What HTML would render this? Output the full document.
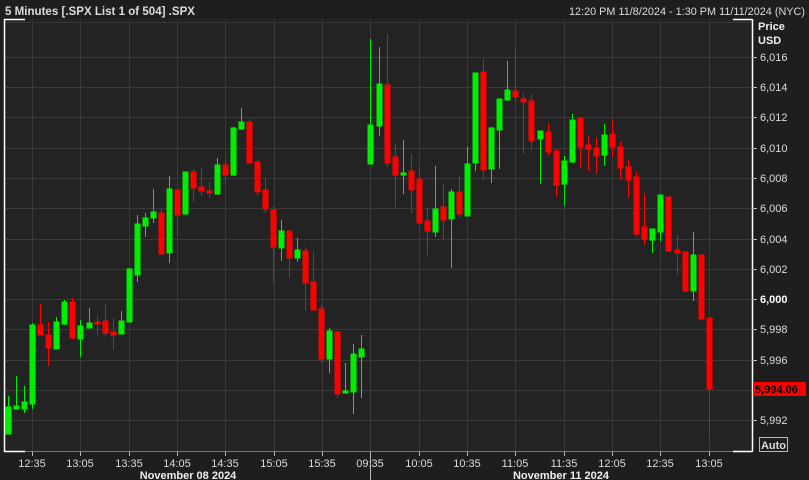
<!DOCTYPE html>
<html><head><meta charset="utf-8"><style>
html,body{margin:0;padding:0;background:#1e1e1e;width:809px;height:480px;overflow:hidden}
svg{display:block}
text{font-family:"Liberation Sans",sans-serif}
.g{fill:#00ee00;stroke:#00ee00}
.r{fill:#ff0000;stroke:#ff0000}
</style></head><body>
<svg width="809" height="480" viewBox="0 0 809 480" xmlns="http://www.w3.org/2000/svg">
<rect x="0" y="0" width="809" height="480" fill="#1e1e1e"/>
<rect x="4" y="19" width="748" height="432" fill="#222322"/>
<text x="5" y="15" font-size="12" font-weight="bold" fill="#dcdcdc" textLength="190" lengthAdjust="spacingAndGlyphs">5 Minutes [.SPX List 1 of 504] .SPX</text>
<text x="569" y="15" font-size="11" fill="#dcdcdc" textLength="236" lengthAdjust="spacingAndGlyphs">12:20 PM 11/8/2024 - 1:30 PM 11/11/2024 (NYC)</text>
<g stroke="#3a3a3a" stroke-width="1">
<line x1="4" y1="22.5" x2="752" y2="22.5"/>
<line x1="4" y1="57.5" x2="752" y2="57.5"/><line x1="4" y1="87.5" x2="752" y2="87.5"/><line x1="4" y1="117.5" x2="752" y2="117.5"/><line x1="4" y1="148.5" x2="752" y2="148.5"/><line x1="4" y1="178.5" x2="752" y2="178.5"/><line x1="4" y1="208.5" x2="752" y2="208.5"/><line x1="4" y1="239.5" x2="752" y2="239.5"/><line x1="4" y1="269.5" x2="752" y2="269.5"/><line x1="4" y1="299.5" x2="752" y2="299.5"/><line x1="4" y1="329.5" x2="752" y2="329.5"/><line x1="4" y1="360.5" x2="752" y2="360.5"/><line x1="4" y1="390.5" x2="752" y2="390.5"/><line x1="4" y1="420.5" x2="752" y2="420.5"/>
<line x1="32.5" y1="19" x2="32.5" y2="451"/><line x1="80.5" y1="19" x2="80.5" y2="451"/><line x1="129.5" y1="19" x2="129.5" y2="451"/><line x1="177.5" y1="19" x2="177.5" y2="451"/><line x1="225.5" y1="19" x2="225.5" y2="451"/><line x1="274.5" y1="19" x2="274.5" y2="451"/><line x1="322.5" y1="19" x2="322.5" y2="451"/><line x1="370.5" y1="19" x2="370.5" y2="451"/><line x1="419.5" y1="19" x2="419.5" y2="451"/><line x1="467.5" y1="19" x2="467.5" y2="451"/><line x1="515.5" y1="19" x2="515.5" y2="451"/><line x1="564.5" y1="19" x2="564.5" y2="451"/><line x1="612.5" y1="19" x2="612.5" y2="451"/><line x1="660.5" y1="19" x2="660.5" y2="451"/><line x1="709.5" y1="19" x2="709.5" y2="451"/>
</g>
<line x1="4" y1="451.5" x2="752" y2="451.5" stroke="#777"/>
<g stroke="#fff" stroke-width="1.5">
<line x1="4.5" y1="19" x2="4.5" y2="452"/>
<line x1="4" y1="19.5" x2="25" y2="19.5"/><line x1="733" y1="19.5" x2="752" y2="19.5"/>
<line x1="4" y1="451.5" x2="25" y2="451.5"/><line x1="733" y1="451.5" x2="752" y2="451.5"/>
<line x1="752.5" y1="19" x2="752.5" y2="452"/>
</g>
<g stroke-width="1">
<!-- Day 1 -->
<g class="g"><line x1="8.5" y1="396" x2="8.5" y2="434"/><rect x="6" y="407" width="5" height="27"/></g>
<g class="g"><line x1="16.5" y1="376" x2="16.5" y2="410"/><rect x="14" y="406" width="5" height="3"/></g>
<g class="g"><line x1="24.5" y1="386" x2="24.5" y2="413"/><rect x="22" y="402" width="5" height="7"/></g>
<g class="g"><line x1="32.5" y1="323" x2="32.5" y2="409"/><rect x="30" y="325" width="5" height="79"/></g>
<g class="r"><line x1="40.5" y1="304" x2="40.5" y2="335"/><rect x="38" y="325" width="5" height="10"/></g>
<g class="r"><line x1="48.5" y1="322" x2="48.5" y2="366"/><rect x="46" y="335" width="5" height="13"/></g>
<g class="g"><line x1="56.5" y1="317" x2="56.5" y2="349"/><rect x="54" y="322" width="5" height="27"/></g>
<g class="g"><line x1="64.5" y1="300" x2="64.5" y2="325"/><rect x="62" y="302" width="5" height="22"/></g>
<g class="r"><line x1="72.5" y1="298" x2="72.5" y2="339"/><rect x="70" y="302" width="5" height="36"/></g>
<g class="g"><line x1="80.5" y1="320" x2="80.5" y2="357"/><rect x="78" y="326" width="5" height="13"/></g>
<g class="g"><line x1="89.5" y1="308" x2="89.5" y2="328"/><rect x="87" y="323" width="5" height="5"/></g>
<g class="r"><line x1="97.5" y1="315" x2="97.5" y2="335"/><rect x="95" y="322" width="5" height="2"/></g>
<g class="r"><line x1="105.5" y1="304" x2="105.5" y2="337"/><rect x="103" y="321" width="5" height="12"/></g>
<g class="r"><line x1="113.5" y1="318" x2="113.5" y2="350"/><rect x="111" y="332" width="5" height="3"/></g>
<g class="g"><line x1="121.5" y1="311" x2="121.5" y2="334"/><rect x="119" y="321" width="5" height="13"/></g>
<g class="g"><line x1="129.5" y1="268" x2="129.5" y2="322"/><rect x="127" y="269" width="5" height="53"/></g>
<g class="g"><line x1="137.5" y1="215" x2="137.5" y2="282"/><rect x="135" y="224" width="5" height="51"/></g>
<g class="g"><line x1="145.5" y1="213" x2="145.5" y2="237"/><rect x="143" y="218" width="5" height="8"/></g>
<g class="g"><line x1="153.5" y1="189" x2="153.5" y2="223"/><rect x="151" y="212" width="5" height="6"/></g>
<g class="r"><line x1="161.5" y1="209" x2="161.5" y2="255"/><rect x="159" y="213" width="5" height="41"/></g>
<g class="g"><line x1="169.5" y1="176" x2="169.5" y2="263"/><rect x="167" y="189" width="5" height="64"/></g>
<g class="r"><line x1="177.5" y1="190" x2="177.5" y2="236"/><rect x="175" y="190" width="5" height="25"/></g>
<g class="g"><line x1="185.5" y1="172" x2="185.5" y2="214"/><rect x="183" y="172" width="5" height="42"/></g>
<g class="r"><line x1="193.5" y1="169" x2="193.5" y2="202"/><rect x="191" y="172" width="5" height="16"/></g>
<g class="r"><line x1="201.5" y1="168" x2="201.5" y2="196"/><rect x="199" y="187" width="5" height="4"/></g>
<g class="r"><line x1="209.5" y1="182" x2="209.5" y2="198"/><rect x="207" y="191" width="5" height="2"/></g>
<g class="g"><line x1="217.5" y1="158" x2="217.5" y2="195"/><rect x="215" y="165" width="5" height="29"/></g>
<g class="r"><line x1="225.5" y1="159" x2="225.5" y2="185"/><rect x="223" y="165" width="5" height="10"/></g>
<g class="g"><line x1="233.5" y1="127" x2="233.5" y2="176"/><rect x="231" y="128" width="5" height="47"/></g>
<g class="g"><line x1="241.5" y1="108" x2="241.5" y2="130"/><rect x="239" y="122" width="5" height="7"/></g>
<g class="r"><line x1="249.5" y1="119" x2="249.5" y2="163"/><rect x="247" y="122" width="5" height="41"/></g>
<g class="r"><line x1="257.5" y1="160" x2="257.5" y2="196"/><rect x="255" y="162" width="5" height="30"/></g>
<g class="r"><line x1="265.5" y1="178" x2="265.5" y2="213"/><rect x="263" y="190" width="5" height="19"/></g>
<g class="r"><line x1="273.5" y1="206" x2="273.5" y2="283"/><rect x="271" y="210" width="5" height="37"/></g>
<g class="g"><line x1="281.5" y1="220" x2="281.5" y2="261"/><rect x="279" y="231" width="5" height="17"/></g>
<g class="r"><line x1="289.5" y1="231" x2="289.5" y2="278"/><rect x="287" y="231" width="5" height="27"/></g>
<g class="g"><line x1="297.5" y1="238" x2="297.5" y2="262"/><rect x="295" y="250" width="5" height="8"/></g>
<g class="r"><line x1="305.5" y1="247" x2="305.5" y2="311"/><rect x="303" y="251" width="5" height="32"/></g>
<g class="r"><line x1="313.5" y1="251" x2="313.5" y2="310"/><rect x="311" y="282" width="5" height="28"/></g>
<g class="r"><line x1="321.5" y1="305" x2="321.5" y2="363"/><rect x="319" y="309" width="5" height="50"/></g>
<g class="g"><line x1="329.5" y1="328" x2="329.5" y2="373"/><rect x="327" y="331" width="5" height="28"/></g>
<g class="r"><line x1="337.5" y1="332" x2="337.5" y2="398"/><rect x="335" y="332" width="5" height="62"/></g>
<g class="g"><line x1="345.5" y1="363" x2="345.5" y2="393"/><rect x="343" y="391" width="5" height="2"/></g>
<g class="g"><line x1="353.5" y1="344" x2="353.5" y2="414"/><rect x="351" y="354" width="5" height="38"/></g>
<g class="g"><line x1="361.5" y1="335" x2="361.5" y2="398"/><rect x="359" y="349" width="5" height="8"/></g>
<!-- Day 2 -->
<g class="g"><line x1="370.5" y1="39" x2="370.5" y2="164"/><rect x="368" y="125" width="5" height="39"/></g>
<g class="g"><line x1="379.5" y1="47" x2="379.5" y2="136"/><rect x="377" y="84" width="5" height="42"/></g>
<g class="r"><line x1="387.5" y1="34" x2="387.5" y2="167"/><rect x="385" y="85" width="5" height="78"/></g>
<g class="r"><line x1="395.5" y1="143" x2="395.5" y2="207"/><rect x="393" y="157" width="5" height="18"/></g>
<g class="g"><line x1="403.5" y1="140" x2="403.5" y2="194"/><rect x="401" y="173" width="5" height="2"/></g>
<g class="r"><line x1="411.5" y1="154" x2="411.5" y2="213"/><rect x="409" y="171" width="5" height="19"/></g>
<g class="r"><line x1="419.5" y1="166" x2="419.5" y2="227"/><rect x="417" y="179" width="5" height="44"/></g>
<g class="r"><line x1="427.5" y1="208" x2="427.5" y2="255"/><rect x="425" y="221" width="5" height="10"/></g>
<g class="g"><line x1="435.5" y1="166" x2="435.5" y2="237"/><rect x="433" y="209" width="5" height="23"/></g>
<g class="r"><line x1="443.5" y1="184" x2="443.5" y2="239"/><rect x="441" y="207" width="5" height="13"/></g>
<g class="g"><line x1="451.5" y1="189" x2="451.5" y2="268"/><rect x="449" y="192" width="5" height="27"/></g>
<g class="r"><line x1="459.5" y1="176" x2="459.5" y2="218"/><rect x="457" y="192" width="5" height="22"/></g>
<g class="g"><line x1="467.5" y1="147" x2="467.5" y2="216"/><rect x="465" y="164" width="5" height="52"/></g>
<g class="g"><line x1="475.5" y1="73" x2="475.5" y2="171"/><rect x="473" y="73" width="5" height="90"/></g>
<g class="r"><line x1="483.5" y1="59" x2="483.5" y2="180"/><rect x="481" y="72" width="5" height="98"/></g>
<g class="g"><line x1="491.5" y1="127" x2="491.5" y2="183"/><rect x="489" y="128" width="5" height="41"/></g>
<g class="g"><line x1="499.5" y1="99" x2="499.5" y2="169"/><rect x="497" y="99" width="5" height="31"/></g>
<g class="g"><line x1="507.5" y1="61" x2="507.5" y2="101"/><rect x="505" y="90" width="5" height="10"/></g>
<g class="r"><line x1="515.5" y1="49" x2="515.5" y2="101"/><rect x="513" y="91" width="5" height="6"/></g>
<g class="r"><line x1="523.5" y1="93" x2="523.5" y2="154"/><rect x="521" y="99" width="5" height="3"/></g>
<g class="r"><line x1="531.5" y1="94" x2="531.5" y2="150"/><rect x="529" y="101" width="5" height="40"/></g>
<g class="g"><line x1="540.5" y1="131" x2="540.5" y2="184"/><rect x="538" y="131" width="5" height="8"/></g>
<g class="r"><line x1="548.5" y1="123" x2="548.5" y2="156"/><rect x="546" y="132" width="5" height="20"/></g>
<g class="r"><line x1="556.5" y1="149" x2="556.5" y2="197"/><rect x="554" y="151" width="5" height="34"/></g>
<g class="g"><line x1="564.5" y1="156" x2="564.5" y2="206"/><rect x="562" y="161" width="5" height="23"/></g>
<g class="g"><line x1="572.5" y1="114" x2="572.5" y2="163"/><rect x="570" y="120" width="5" height="42"/></g>
<g class="r"><line x1="580.5" y1="118" x2="580.5" y2="168"/><rect x="578" y="118" width="5" height="29"/></g>
<g class="r"><line x1="588.5" y1="135" x2="588.5" y2="171"/><rect x="586" y="145" width="5" height="4"/></g>
<g class="r"><line x1="596.5" y1="137" x2="596.5" y2="174"/><rect x="594" y="148" width="5" height="8"/></g>
<g class="g"><line x1="604.5" y1="124" x2="604.5" y2="166"/><rect x="602" y="135" width="5" height="20"/></g>
<g class="r"><line x1="612.5" y1="119" x2="612.5" y2="157"/><rect x="610" y="134" width="5" height="13"/></g>
<g class="r"><line x1="620.5" y1="141" x2="620.5" y2="180"/><rect x="618" y="147" width="5" height="21"/></g>
<g class="r"><line x1="628.5" y1="160" x2="628.5" y2="198"/><rect x="626" y="167" width="5" height="13"/></g>
<g class="r"><line x1="636.5" y1="172" x2="636.5" y2="236"/><rect x="634" y="177" width="5" height="57"/></g>
<g class="r"><line x1="644.5" y1="193" x2="644.5" y2="245"/><rect x="642" y="227" width="5" height="12"/></g>
<g class="g"><line x1="652.5" y1="229" x2="652.5" y2="253"/><rect x="650" y="229" width="5" height="11"/></g>
<g class="g"><line x1="660.5" y1="195" x2="660.5" y2="241"/><rect x="658" y="195" width="5" height="37"/></g>
<g class="r"><line x1="668.5" y1="197" x2="668.5" y2="251"/><rect x="666" y="197" width="5" height="54"/></g>
<g class="r"><line x1="677.5" y1="235" x2="677.5" y2="275"/><rect x="675" y="250" width="5" height="3"/></g>
<g class="r"><line x1="685.5" y1="252" x2="685.5" y2="292"/><rect x="683" y="252" width="5" height="39"/></g>
<g class="g"><line x1="693.5" y1="232" x2="693.5" y2="301"/><rect x="691" y="255" width="5" height="36"/></g>
<g class="r"><line x1="701.5" y1="255" x2="701.5" y2="319"/><rect x="699" y="255" width="5" height="64"/></g>
<g class="r"><line x1="709.5" y1="318" x2="709.5" y2="437"/><rect x="707" y="318" width="5" height="71"/></g>
</g>
<!-- right axis -->
<g fill="#dcdcdc" font-size="11">
<text x="758" y="30" font-weight="bold" fill="#eee">Price</text>
<text x="758" y="44" font-weight="bold" fill="#eee">USD</text>
<g stroke="#bbb"><line x1="752" y1="57.5" x2="757" y2="57.5"/><line x1="752" y1="87.5" x2="757" y2="87.5"/><line x1="752" y1="117.5" x2="757" y2="117.5"/><line x1="752" y1="148.5" x2="757" y2="148.5"/><line x1="752" y1="178.5" x2="757" y2="178.5"/><line x1="752" y1="208.5" x2="757" y2="208.5"/><line x1="752" y1="239.5" x2="757" y2="239.5"/><line x1="752" y1="269.5" x2="757" y2="269.5"/><line x1="752" y1="299.5" x2="757" y2="299.5"/><line x1="752" y1="329.5" x2="757" y2="329.5"/><line x1="752" y1="360.5" x2="757" y2="360.5"/><line x1="752" y1="420.5" x2="757" y2="420.5"/></g>
<text x="760" y="61">6,016</text>
<text x="760" y="91">6,014</text>
<text x="760" y="121">6,012</text>
<text x="760" y="152">6,010</text>
<text x="760" y="182">6,008</text>
<text x="760" y="212">6,006</text>
<text x="760" y="243">6,004</text>
<text x="760" y="273">6,002</text>
<text x="760" y="303" font-weight="bold" fill="#fff">6,000</text>
<text x="760" y="333">5,998</text>
<text x="760" y="364">5,996</text>
<text x="760" y="424">5,992</text>
</g>
<rect x="753" y="382" width="53" height="14" fill="#ff0000"/>
<text x="755" y="393" font-size="11" font-weight="bold" fill="#000">5,994.06</text>
<rect x="759.5" y="437.5" width="28" height="14" fill="none" stroke="#bbb"/>
<text x="761" y="449" font-size="11" font-weight="bold" fill="#dcdcdc" textLength="25" lengthAdjust="spacingAndGlyphs">Auto</text>
<!-- bottom axis -->
<g stroke="#bbb"><line x1="32.5" y1="452" x2="32.5" y2="456"/><line x1="80.5" y1="452" x2="80.5" y2="456"/><line x1="129.5" y1="452" x2="129.5" y2="456"/><line x1="177.5" y1="452" x2="177.5" y2="456"/><line x1="225.5" y1="452" x2="225.5" y2="456"/><line x1="274.5" y1="452" x2="274.5" y2="456"/><line x1="322.5" y1="452" x2="322.5" y2="456"/><line x1="370.5" y1="452" x2="370.5" y2="480"/><line x1="419.5" y1="452" x2="419.5" y2="456"/><line x1="467.5" y1="452" x2="467.5" y2="456"/><line x1="515.5" y1="452" x2="515.5" y2="456"/><line x1="564.5" y1="452" x2="564.5" y2="456"/><line x1="612.5" y1="452" x2="612.5" y2="456"/><line x1="660.5" y1="452" x2="660.5" y2="456"/><line x1="709.5" y1="452" x2="709.5" y2="456"/></g>
<g fill="#dcdcdc" font-size="11" text-anchor="middle">
<text x="32" y="467">12:35</text><text x="80" y="467">13:05</text><text x="129" y="467">13:35</text><text x="177" y="467">14:05</text><text x="225" y="467">14:35</text><text x="274" y="467">15:05</text><text x="322" y="467">15:35</text><text x="370" y="467">09:35</text><text x="419" y="467">10:05</text><text x="467" y="467">10:35</text><text x="515" y="467">11:05</text><text x="564" y="467">11:35</text><text x="612" y="467">12:05</text><text x="660" y="467">12:35</text><text x="709" y="467">13:05</text>
<text x="188" y="479" font-weight="bold" fill="#eee">November 08 2024</text>
<text x="561" y="479" font-weight="bold" fill="#eee">November 11 2024</text>
</g>
</svg>
</body></html>
